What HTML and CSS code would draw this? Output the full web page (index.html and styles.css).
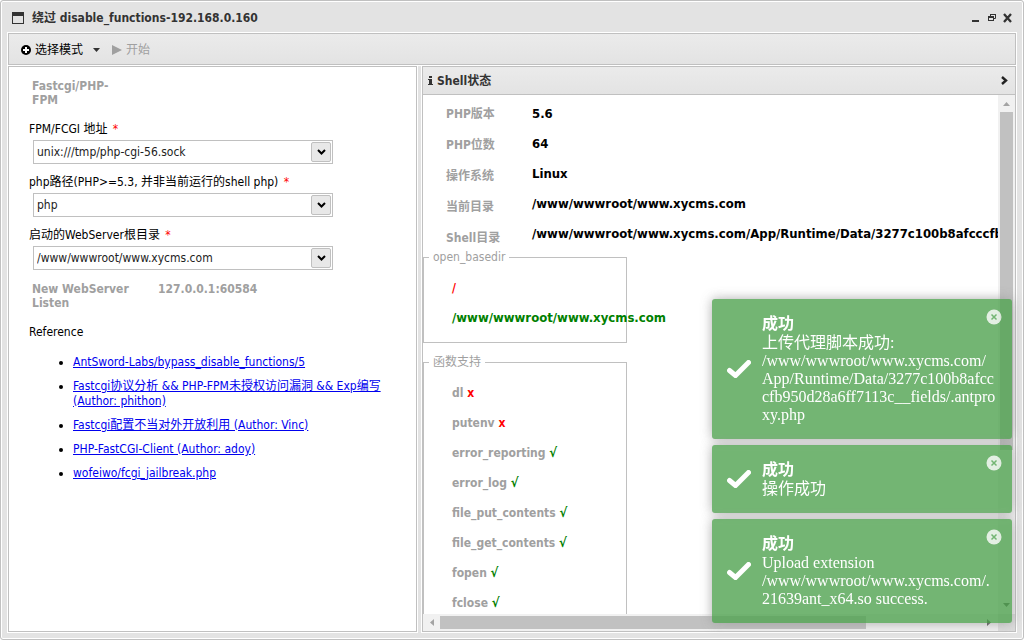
FILE: index.html
```html
<!DOCTYPE html>
<html lang="zh-CN">
<head>
  <meta charset="UTF-8">
  <title>绕过 disable_functions</title>
  <meta name="viewport" content="width=device-width, initial-scale=1">
  <link rel="stylesheet" href="styles.css">
</head>
<body>

  <div class="window">
    <header class="titlebar">
      <svg class="win-icon" width="12" height="12" viewBox="0 0 12 12"><path d="M0 0h12v12H0z M1 4v7h10V4z" fill="#333" fill-rule="evenodd"/></svg>
      <h1>绕过 disable_functions-192.168.0.160</h1>
      <div class="win-buttons">
        <button type="button" aria-label="Minimize"><svg width="16" height="14" viewBox="0 0 16 14"><path d="M4 9h7v2H4z" fill="#333"/></svg></button>
        <button type="button" aria-label="Restore"><svg width="16" height="14" viewBox="0 0 16 14"><path d="M6.500 5V3.500h5v4H10" fill="none" stroke="#333"/><path d="M6 3h6v1H6z" fill="#333"/><path d="M4 5h6v5H4z M5 7v2h4V7z" fill="#333" fill-rule="evenodd"/></svg></button>
        <button type="button" aria-label="Close"><svg width="16" height="14" viewBox="0 0 16 14"><path d="M4 3l7 8M11 3l-7 8" stroke="#333" stroke-width="2.300"/></svg></button>
      </div>
    </header>

    <nav class="toolbar">
      <button type="button">
        <svg width="10" height="10" viewBox="0 0 10 10"><circle cx="5" cy="5" r="5"/><path d="M5 2v6M2 5h6" stroke="#fff" stroke-width="2"/></svg>
        选择模式
        <svg class="caret" width="7" height="4" viewBox="0 0 7 4"><path d="M0 0h7L3.500 4z" fill="#333"/></svg>
      </button>
      <button type="button" disabled>
        <svg width="10" height="10" viewBox="0 0 10 10"><path d="M0 0l10 5-10 5z" fill="#a0a0a0"/></svg>
        开始
      </button>
    </nav>

    <main class="layout">
      <section class="panel form-panel">
        <form>
          <div class="item"><span class="item-name">Fastcgi/PHP-<br>FPM</span></div>

          <label for="fpm">FPM/FCGI 地址 <span class="req">*</span></label>
          <div class="combo">
            <input type="text" id="fpm" value="unix:///tmp/php-cgi-56.sock">
            <button type="button" aria-label="Open list"><svg width="9" height="6" viewBox="0 0 9 6"><path d="M1 1l3.500 3.500L8 1" fill="none" stroke="#000" stroke-width="2"/></svg></button>
          </div>

          <label for="php">php路径(PHP&gt;=5.3, 并非当前运行的shell php) <span class="req">*</span></label>
          <div class="combo">
            <input type="text" id="php" value="php">
            <button type="button" aria-label="Open list"><svg width="9" height="6" viewBox="0 0 9 6"><path d="M1 1l3.500 3.500L8 1" fill="none" stroke="#000" stroke-width="2"/></svg></button>
          </div>

          <label for="root">启动的WebServer根目录 <span class="req">*</span></label>
          <div class="combo">
            <input type="text" id="root" value="/www/wwwroot/www.xycms.com">
            <button type="button" aria-label="Open list"><svg width="9" height="6" viewBox="0 0 9 6"><path d="M1 1l3.500 3.500L8 1" fill="none" stroke="#000" stroke-width="2"/></svg></button>
          </div>

          <div class="item"><span class="item-name">New WebServer Listen</span><span>127.0.0.1:60584</span></div>
        </form>

        <p class="ref-title">Reference</p>
        <ul class="refs">
          <li><a href="#">AntSword-Labs/bypass_disable_functions/5</a></li>
          <li><a href="#">Fastcgi协议分析 &amp;&amp; PHP-FPM未授权访问漏洞 &amp;&amp; Exp编写<br>(Author: phithon)</a></li>
          <li><a href="#">Fastcgi配置不当对外开放利用 (Author: Vinc)</a></li>
          <li><a href="#">PHP-FastCGI-Client (Author: adoy)</a></li>
          <li><a href="#">wofeiwo/fcgi_jailbreak.php</a></li>
        </ul>
      </section>

      <section class="panel status-panel">
        <header class="panel-head">
          <svg width="5" height="9" viewBox="0 0 5 9"><path d="M1 0h3v2H1zM0 3h4v5h1v1H0V8h1V4H0z" fill="#333"/></svg>
          <h2>Shell状态</h2>
          <button type="button" aria-label="Collapse"><svg width="7" height="9" viewBox="0 0 7 9"><path d="M1 1l4 3.500L1 8" fill="none" stroke="#222" stroke-width="2.400"/></svg></button>
        </header>

        <div class="scroll-area">
          <div class="status">
            <div class="info">
              <ul class="names">
                <li>PHP版本</li>
                <li>PHP位数</li>
                <li>操作系统</li>
                <li>当前目录</li>
                <li>Shell目录</li>
              </ul>
              <ul class="values">
                <li>5.6</li>
                <li>64</li>
                <li>Linux</li>
                <li>/www/wwwroot/www.xycms.com</li>
                <li>/www/wwwroot/www.xycms.com/App/Runtime/Data/3277c100b8afcccfb950d28a6ff7113c__fields</li>
              </ul>
            </div>

            <fieldset>
              <legend>open_basedir</legend>
              <ul>
                <li class="no">/</li>
                <li class="yes">/www/wwwroot/www.xycms.com</li>
              </ul>
            </fieldset>

            <fieldset>
              <legend>函数支持</legend>
              <ul>
                <li>dl <span class="no">x</span></li>
                <li>putenv <span class="no">x</span></li>
                <li>error_reporting <span class="yes">√</span></li>
                <li>error_log <span class="yes">√</span></li>
                <li>file_put_contents <span class="yes">√</span></li>
                <li>file_get_contents <span class="yes">√</span></li>
                <li>fopen <span class="yes">√</span></li>
                <li>fclose <span class="yes">√</span></li>
              </ul>
            </fieldset>
          </div>

          <div class="bar bar-y">
            <svg width="7" height="4" viewBox="0 0 7 4"><path d="M0 4h7L3.500 0z" fill="#a3a3a3"/></svg>
            <div class="thumb"></div>
            <svg width="7" height="4" viewBox="0 0 7 4"><path d="M0 0h7L3.500 4z" fill="#505050"/></svg>
          </div>
          <div class="bar bar-x">
            <svg width="4" height="7" viewBox="0 0 4 7"><path d="M4 0v7L0 3.500z" fill="#a3a3a3"/></svg>
            <div class="thumb"></div>
            <svg width="4" height="7" viewBox="0 0 4 7"><path d="M0 0v7l4-3.500z" fill="#505050"/></svg>
          </div>
          <div class="corner"></div>
        </div>
      </section>
    </main>
  </div>

  <div class="toasts">
    <div class="toast">
      <svg width="24" height="18" viewBox="0 0 24 18"><path d="M2.500 10.500l6 5L21.500 2.500" fill="none" stroke="#fff" stroke-width="5" stroke-linecap="round"/></svg>
      <div class="toast-body">
        <strong>成功</strong>
        <p>上传代理脚本成功:<br>/www/wwwroot/www.xycms.com/<wbr>App/Runtime/Data/3277c100b8afcccfb950d28a6ff7113c__fields/.antproxy.php</p>
      </div>
      <button type="button" aria-label="Close"><svg width="16" height="16" viewBox="0 0 16 16"><circle cx="8" cy="8" r="7.500" fill="#fff"/><path d="M5.500 5.500l5 5M10.500 5.500l-5 5" stroke="#51a351" stroke-width="1.500"/></svg></button>
    </div>
    <div class="toast">
      <svg width="24" height="18" viewBox="0 0 24 18"><path d="M2.500 10.500l6 5L21.500 2.500" fill="none" stroke="#fff" stroke-width="5" stroke-linecap="round"/></svg>
      <div class="toast-body">
        <strong>成功</strong>
        <p>操作成功</p>
      </div>
      <button type="button" aria-label="Close"><svg width="16" height="16" viewBox="0 0 16 16"><circle cx="8" cy="8" r="7.500" fill="#fff"/><path d="M5.500 5.500l5 5M10.500 5.500l-5 5" stroke="#51a351" stroke-width="1.500"/></svg></button>
    </div>
    <div class="toast">
      <svg width="24" height="18" viewBox="0 0 24 18"><path d="M2.500 10.500l6 5L21.500 2.500" fill="none" stroke="#fff" stroke-width="5" stroke-linecap="round"/></svg>
      <div class="toast-body">
        <strong>成功</strong>
        <p>Upload extension<br>/www/wwwroot/www.xycms.com/.<wbr>21639ant_x64.so success.</p>
      </div>
      <button type="button" aria-label="Close"><svg width="16" height="16" viewBox="0 0 16 16"><circle cx="8" cy="8" r="7.500" fill="#fff"/><path d="M5.500 5.500l5 5M10.500 5.500l-5 5" stroke="#51a351" stroke-width="1.500"/></svg></button>
    </div>
  </div>

  <script>
    const fpm = document.getElementById("fpm");
    fpm.focus();
    fpm.setSelectionRange(fpm.value.length, fpm.value.length);
  </script>
</body>
</html>
```

FILE: styles.css
```css
* {
  box-sizing: border-box;
}
body {
  margin: 0;
  font-family: Tahoma, "DejaVu Sans Condensed", "Noto Sans CJK SC", sans-serif;
  font-size: 12px;
  line-height: 14px;
  color: #000;
}
h1, h2, p, ul {
  margin: 0;
  padding: 0;
  font-size: 12px;
}
ul {
  list-style: none;
}
button {
  display: flex;
  align-items: center;
  padding: 0;
  border: 0;
  background: none;
  font: inherit;
  color: inherit;
}
svg {
  display: block;
  flex: none;
}

/* window */
.window {
  display: flex;
  flex-direction: column;
  height: 100vh;
  padding: 0 7px 7px;
  border: 1px solid #c0c0c0;
  border-radius: 3px;
  background: #e3e3e3;
  box-shadow: inset 0 0 0 1px #fff;
  overflow: hidden;
}
.titlebar {
  display: flex;
  align-items: center;
  gap: 8px;
  flex: none;
  height: 32px;
  padding: 2px 0 0 4px;
  color: #333;
}
.titlebar h1 {
  flex: 1;
}
.win-buttons {
  display: flex;
}
.toolbar {
  display: flex;
  align-items: center;
  gap: 12px;
  flex: none;
  height: 32px;
  padding: 1px 12px 0;
  border: 1px solid #c0c0c0;
  outline: 1px solid #fff;
  background: linear-gradient(#ebebeb, #e3e3e3);
}
.toolbar button {
  gap: 4px;
}
.toolbar button:disabled {
  color: #a0a0a0;
}
.caret {
  margin-left: 6px;
}
.layout {
  display: grid;
  grid-template-columns: 409fr 594fr;
  grid-template-rows: minmax(0, 1fr);
  gap: 5px;
  flex: 1;
  min-height: 0;
  margin-top: 1px;
}
.panel {
  min-width: 0;
  border: 1px solid #c0c0c0;
  outline: 1px solid #fff;
  background: #fff;
}

/* left form */
.form-panel {
  padding: 12px 20px;
  overflow: hidden;
}
.item {
  display: flex;
  gap: 26px;
  padding: 0 3px;
  font-weight: bold;
  color: #a0a0a0;
}
.item-name {
  width: 100px;
}
.form-panel label {
  display: block;
  margin-top: 15px;
}
.combo + label {
  margin-top: 11px;
}
.req {
  margin-left: 2px;
  color: red;
}
.combo {
  display: flex;
  width: 300px;
  height: 24px;
  margin: 4px 0 0 4px;
  padding: 1px;
  border: 1px solid #c0c0c0;
}
.combo input {
  flex: 1;
  min-width: 0;
  padding: 0 2px;
  border: 0;
  outline: 0;
  font: inherit;
  color: #222;
}
.combo button {
  justify-content: center;
  width: 20px;
  border: 1px solid #c0c0c0;
  border-radius: 2px;
  background: #e8e8e8;
}
.combo + .item {
  margin-top: 12px;
}
.ref-title {
  margin-top: 15px;
}
.refs {
  margin-top: 16px;
  padding-left: 44px;
  list-style: disc;
}
.refs li {
  margin-bottom: 9px;
  line-height: 15px;
}
.refs a {
  color: #0000ee;
}

/* right status */
.status-panel {
  display: flex;
  flex-direction: column;
}
.panel-head {
  display: flex;
  align-items: center;
  gap: 4px;
  flex: none;
  height: 28px;
  padding: 0 7px 0 5px;
  border-bottom: 1px solid #c0c0c0;
  background: linear-gradient(#ebebeb, #e3e3e3);
  color: #333;
}
.panel-head h2 {
  flex: 1;
}
.scroll-area {
  display: grid;
  grid-template-columns: minmax(0, 1fr) 17px;
  grid-template-rows: minmax(0, 1fr) 17px;
  flex: 1;
  min-height: 0;
}
.status {
  overflow: hidden;
  font-weight: bold;
}
.info {
  display: flex;
  height: 155px;
  padding: 4px 0 0 23px;
  white-space: nowrap;
}
.names {
  flex: none;
  width: 86px;
  line-height: 31px;
  color: #a0a0a0;
}
.values {
  font-size: 13px;
  line-height: 30px;
}
fieldset {
  width: 204px;
  min-width: 0;
  margin: 0 0 12px;
  padding: 9px 0 9px 28px;
  border: 1px solid #c0c0c0;
  color: #a0a0a0;
}
fieldset legend {
  margin-left: -23px;
  padding: 0 4px;
  font-weight: normal;
}
fieldset li {
  height: 30px;
  line-height: 30px;
  white-space: nowrap;
}
.no {
  color: red;
}
.yes {
  color: green;
  font-size: 13px;
}
.bar {
  display: flex;
  align-items: center;
  justify-content: space-between;
  background: #f1f1f1;
}
.thumb {
  background: #c1c1c1;
}
.bar-y {
  flex-direction: column;
  padding: 7px 0;
}
.bar-y .thumb {
  width: 13px;
  height: 67%;
  margin: 6px 0 auto;
}
.bar-x {
  padding: 0 7px;
}
.bar-x .thumb {
  width: 76%;
  height: 13px;
  margin: 0 auto 0 6px;
}
.corner {
  background: #dcdcdc;
}

/* notifications */
.toasts {
  position: fixed;
  right: 12px;
  bottom: 17px;
  width: 300px;
}
.toast {
  display: flex;
  gap: 11px;
  margin-top: 6px;
  padding: 15px;
  border-radius: 3px;
  background: #51a351;
  box-shadow: 0 0 12px #999;
  color: #fff;
  opacity: 0.8;
  font-family: "Liberation Serif", "Noto Sans CJK SC", serif;
  font-size: 16px;
  line-height: 18px;
}
.toast > svg {
  align-self: center;
}
.toast-body {
  flex: 1;
  min-width: 0;
}
.toast strong {
  display: block;
  line-height: 20px;
}
.toast p {
  font-size: 16px;
  word-wrap: break-word;
}
.toast button {
  align-self: flex-start;
  margin: -5px -5px 0 -22px;
  opacity: 0.8;
}
```
